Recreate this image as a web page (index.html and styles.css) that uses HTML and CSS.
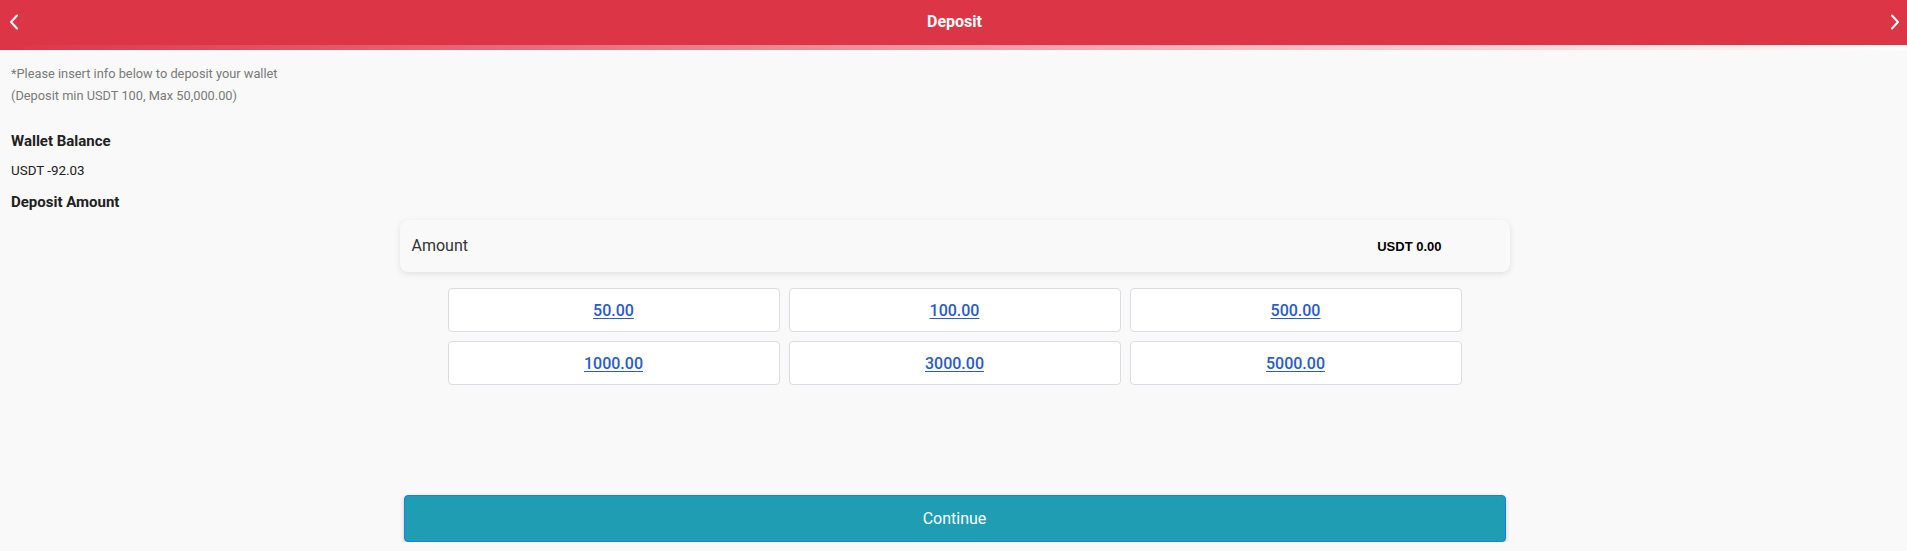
FILE: index.html
```html
<!DOCTYPE html>
<html lang="en">
<head>
<meta charset="utf-8">
<title>Deposit</title>
<link rel="stylesheet" href="styles.css">
</head>
<body>
<header class="topbar">
  <a class="nav-btn" href="#" aria-label="Back">
    <svg width="10" height="16" viewBox="0 0 10 16"><polyline points="8,1.5 2,8 8,14.5" fill="none" stroke="#fff" stroke-width="2" stroke-linecap="round" stroke-linejoin="round"/></svg>
  </a>
  <h1 class="title">Deposit</h1>
  <a class="nav-btn" href="#" aria-label="Forward">
    <svg width="10" height="16" viewBox="0 0 10 16"><polyline points="2,1.5 8,8 2,14.5" fill="none" stroke="#fff" stroke-width="2" stroke-linecap="round" stroke-linejoin="round"/></svg>
  </a>
</header>
<div class="strip"></div>

<main class="page">
  <div class="intro">
    <p class="note">*Please insert info below to deposit your wallet</p>
    <p class="note">(Deposit min USDT 100, Max 50,000.00)</p>
  </div>
  <h2 class="label label-first">Wallet Balance</h2>
  <p class="value">USDT -92.03</p>
  <h2 class="label">Deposit Amount</h2>

  <section class="form">
    <div class="amount-card">
      <span class="amount-label">Amount</span>
      <span class="amount-value">USDT 0.00</span>
    </div>
    <div class="presets">
      <a class="preset" href="#">50.00</a>
      <a class="preset" href="#">100.00</a>
      <a class="preset" href="#">500.00</a>
      <a class="preset" href="#">1000.00</a>
      <a class="preset" href="#">3000.00</a>
      <a class="preset" href="#">5000.00</a>
    </div>
    <div class="actions">
      <button class="continue" type="button">Continue</button>
    </div>
  </section>
</main>
</body>
</html>
```

FILE: styles.css
```css
* { box-sizing: border-box; }

body {
  margin: 0;
  background: #f9f9f9;
  font-family: Roboto, "Liberation Sans", Arial, sans-serif;
  color: #212529;
}

.topbar {
  height: 45px;
  background: #dc3545;
  display: flex;
  align-items: center;
  padding: 0 7px 0 9px;
}

.nav-btn {
  display: flex;
  width: 10px;
  height: 16px;
  margin-top: -2px;
}

.title {
  flex: 1;
  margin: 0;
  text-align: center;
  color: #fff;
  font-size: 16px;
  font-weight: 700;
  margin-top: -3px;
}

.strip {
  height: 5px;
  background: linear-gradient(to right, #dc3545, #ffffff);
}

.page {
  padding: 0 11px;
}

.intro {
  padding-top: 13px;
}

.note {
  margin: 0;
  font-size: 12.8px;
  line-height: 22px;
  color: #7a7a7a;
}

.label {
  margin: 9px 0 0;
  font-size: 15px;
  line-height: 22px;
  font-weight: 700;
  color: #212121;
}

.label-first {
  margin-top: 23px;
}

.value {
  margin: 8px 0 0;
  font-size: 13.4px;
  line-height: 22px;
  color: #212121;
}

.form {
  width: 1110px;
  margin: 7px auto 0;
  position: relative;
  left: 1px;
}

.amount-card {
  height: 52px;
  display: flex;
  align-items: center;
  justify-content: space-between;
  padding: 0 68px 0 12px;
  background: #f9f9f9;
  border-radius: 8px;
  box-shadow: 0 2px 6px rgba(0, 0, 0, 0.10);
}

.amount-label {
  font-size: 16px;
  color: #333;
  margin-top: -2px;
}

.amount-value {
  font-family: "Liberation Sans", Arial, sans-serif;
  font-size: 13px;
  font-weight: 700;
  color: #000;
  margin-top: 1px;
}

.presets {
  display: grid;
  grid-template-columns: repeat(3, 1fr);
  gap: 9px;
  padding: 0 48px;
  margin-top: 16px;
}

.preset {
  height: 44px;
  display: flex;
  align-items: center;
  justify-content: center;
  background: #fff;
  border: 1px solid #dcdce2;
  border-radius: 4px;
  color: #2a5bc6;
  font-size: 16px;
  font-weight: 500;
  text-decoration: underline;
  text-underline-offset: 2px;
}

.actions {
  padding: 0 4px;
  margin-top: 110px;
}

.continue {
  display: block;
  width: 100%;
  height: 47px;
  background: #1f9db3;
  border: 1px solid #1a7bf2;
  border-radius: 4px;
  color: #fff;
  font-family: Roboto, "Liberation Sans", Arial, sans-serif;
  font-size: 16px;
  box-shadow: 0 2px 4px rgba(0, 0, 0, 0.2);
}
```
